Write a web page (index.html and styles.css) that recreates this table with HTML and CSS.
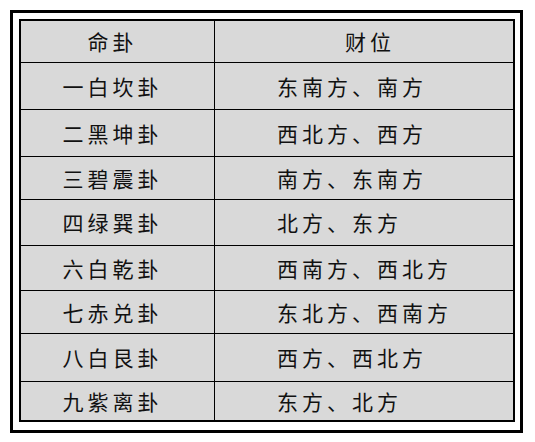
FILE: index.html
```html
<!DOCTYPE html>
<html lang="zh-CN">
<head>
<meta charset="utf-8">
<title>命卦财位</title>
<link rel="stylesheet" href="styles.css">
</head>
<body>
<div class="frame">
  <div class="table">
    <div class="cell name head">命卦</div>
    <div class="cell pos head">财位</div>

    <div class="cell name">一白坎卦</div>
    <div class="cell pos">东南方、南方</div>

    <div class="cell name">二黑坤卦</div>
    <div class="cell pos">西北方、西方</div>

    <div class="cell name">三碧震卦</div>
    <div class="cell pos">南方、东南方</div>

    <div class="cell name">四绿巽卦</div>
    <div class="cell pos">北方、东方</div>

    <div class="cell name">六白乾卦</div>
    <div class="cell pos">西南方、西北方</div>

    <div class="cell name">七赤兑卦</div>
    <div class="cell pos">东北方、西南方</div>

    <div class="cell name">八白艮卦</div>
    <div class="cell pos">西方、西北方</div>

    <div class="cell name">九紫离卦</div>
    <div class="cell pos">东方、北方</div>
  </div>
</div>
</body>
</html>
```

FILE: styles.css
```css
html, body {
  margin: 0;
  padding: 0;
  background: #ffffff;
}

body {
  font-family: "Noto Sans CJK SC", "Noto Sans CJK TC", sans-serif;
  color: #111111;
}

.frame {
  margin: 10px 0 0 10px;
  width: 513px;
  height: 423px;
  border: 3px solid #000000;
  padding: 6px 5px 8px 6px;
  box-sizing: border-box;
}

.table {
  display: grid;
  grid-template-columns: 194px 298px;
  grid-template-rows: 41px 47px 47px 43px 46px 45px 43px 48px 39px;
  border: 2px solid #000000;
  background: #d9d9d9;
  width: 496px;
  box-sizing: border-box;
}

.cell {
  display: flex;
  align-items: center;
  font-size: 21px;
  letter-spacing: 4px;
  line-height: 1;
  border-top: 1px solid #000000;
  box-sizing: border-box;
  white-space: nowrap;
}

.cell.head {
  border-top: none;
}

.name {
  justify-content: center;
  padding-right: 10px;
  border-right: 1px solid #000000;
}

.pos {
  padding-left: 62px;
}

.pos.head {
  justify-content: center;
  padding-left: 12px;
}
```
